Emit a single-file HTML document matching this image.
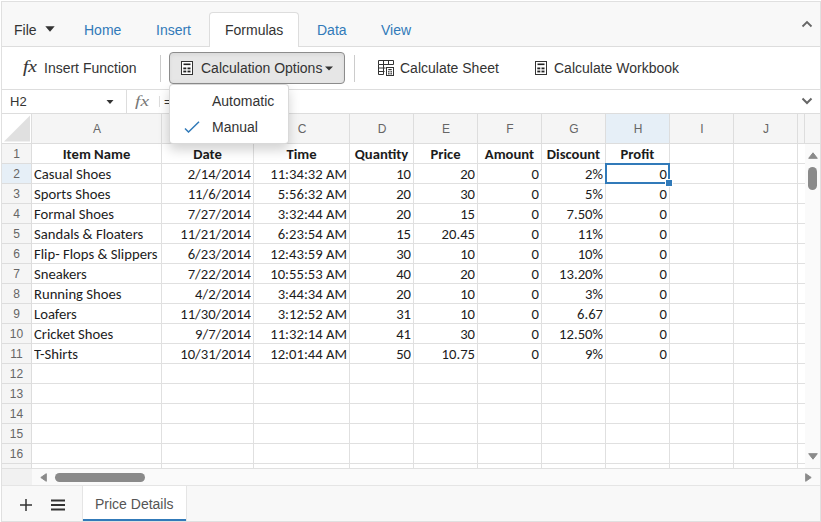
<!DOCTYPE html><html><head><meta charset="utf-8"><title>Spreadsheet</title><style>
html,body{margin:0;padding:0;background:#fff;}
body{width:821px;height:522px;position:relative;overflow:hidden;font-family:"Liberation Sans",Arial,sans-serif;font-size:14px;color:#333;}
.a{position:absolute;}
#wrap{left:1px;top:1px;width:818px;height:519px;border:1px solid #e0e0e0;background:#fff;}
#tabbar{left:2px;top:2px;width:818px;height:44px;background:#f8f8f8;border-bottom:1px solid #ddd;}
.tab{top:22px;height:16px;line-height:16px;color:#317ab9;white-space:nowrap;}
#acttab{left:209px;top:12px;width:88px;height:35px;border:1px solid #ddd;border-bottom:none;border-radius:4px 4px 0 0;background:#fff;}
#ribbon{left:2px;top:47px;width:818px;height:42px;border-bottom:1px solid #ddd;background:#fff;}
.rt{top:60px;height:16px;line-height:16px;white-space:nowrap;}
.sep{width:1px;background:#ccc;}
#cbtn{left:169px;top:52px;width:174px;height:30px;border:1px solid #8c8c8c;border-radius:4px;background:#e6e6e6;box-shadow:inset 0 2px 4px rgba(0,0,0,.06);}
#fbar{left:2px;top:90px;width:818px;height:23px;border-bottom:1px solid #ddd;background:#fff;}
#pop{left:169px;top:84px;width:118px;height:58px;border:1px solid rgba(0,0,0,.15);border-radius:4px;background:#fff;box-shadow:0 6px 12px rgba(0,0,0,.175);}
.mi{left:212px;height:16px;line-height:16px;white-space:nowrap;}
#colhdr{left:2px;top:114px;width:818px;height:29px;background:#f5f5f5;border-bottom:1px solid #ddd;}
.ch{top:114px;height:29px;line-height:30px;text-align:center;text-indent:1px;border-right:1px solid #ddd;color:#666;font-size:12px;}
.rh{left:2px;width:29px;height:19px;line-height:21px;text-align:center;background:#f5f5f5;border-right:1px solid #ddd;border-bottom:1px solid #ddd;color:#666;font-size:12px;}
.hl{background:#e6eff7;}
.gl{background:#e0e0e0;}
.c{height:19px;line-height:20px;font-family:Carlito,Calibri,"Liberation Sans",sans-serif;font-size:14.67px;font-size-adjust:0.4775;color:#1c1c1c;white-space:nowrap;overflow:hidden;}
.b{font-weight:bold;text-align:center;font-size-adjust:0.4849;}
.r{text-align:right;}
#vs{left:805px;top:144px;width:15px;height:324px;background:#fafafa;}
#hs{left:2px;top:468px;width:818px;height:16px;background:#fafafa;border-top:1px solid #e0e0e0;border-bottom:1px solid #e5e5e5;}
#sbar{left:2px;top:486px;width:818px;height:35px;background:#f8f8f8;}
#stab{left:82px;top:486px;width:103px;height:35px;background:#fff;border-left:1px solid #e5e5e5;border-right:1px solid #e5e5e5;}
#sline{left:83px;top:519px;width:103px;height:2px;background:#317ab9;}
</style></head><body>
<div id="wrap" class="a"></div>
<div id="tabbar" class="a"></div>
<div id="acttab" class="a"></div>
<div class="a tab" style="left:14px;color:#333">File</div>
<svg class="a" style="left:45px;top:26px" width="10" height="6" viewBox="0 0 10 6"><path d="M0.3 0.2H9.7L5 5.8z" fill="#333"/></svg>
<div class="a tab" style="left:84px">Home</div>
<div class="a tab" style="left:156px">Insert</div>
<div class="a tab" style="left:317px">Data</div>
<div class="a tab" style="left:381px">View</div>
<div class="a tab" style="left:225px;color:#333">Formulas</div>
<svg class="a" style="left:801px;top:20px" width="12" height="8" viewBox="0 0 12 8"><path d="M1.5 6.5L6 2L10.5 6.5" fill="none" stroke="#666" stroke-width="1.8"/></svg>
<div id="ribbon" class="a"></div>
<div class="a" style="left:23px;top:57px;width:13px;height:20px;line-height:20px;font-family:'Liberation Serif',serif;font-style:italic;font-size:16px;color:#333;transform:scaleX(1.2);transform-origin:0 0;-webkit-text-stroke:0.1px #333">fx</div>
<div class="a rt" style="left:44px">Insert Function</div>
<div class="a sep" style="left:160px;top:55px;height:27px"></div>
<div id="cbtn" class="a"></div>
<svg class="a" style="left:181px;top:61px" width="12" height="14" viewBox="0 0 12 14"><rect x="0.5" y="0.5" width="11" height="13" fill="#fff" stroke="#333"/><rect x="2.5" y="2.5" width="7" height="1.6" fill="#222"/><rect x="2.3" y="6.5" width="3" height="1.8" fill="#222"/><rect x="6.5" y="6.5" width="3" height="1.8" fill="#222"/><rect x="2.3" y="9.6" width="3" height="1.8" fill="#222"/><rect x="6.5" y="9.6" width="3" height="1.8" fill="#222"/></svg>
<div class="a rt" style="left:201px">Calculation Options</div>
<svg class="a" style="left:325px;top:66px" width="8" height="5" viewBox="0 0 8 5"><path d="M0 0.5H8L4 4.5z" fill="#333"/></svg>
<div class="a sep" style="left:354px;top:55px;height:27px"></div>
<svg class="a" style="left:378px;top:60px" width="16" height="16" viewBox="0 0 16 16"><g fill="none" stroke="#333"><path d="M0.5 0.5H15.5V4.5H0.5zM5.5 0.5V14.5M10.5 0.5V4.5M0.5 4.5V14.5H5.5M0.5 8H7.5M0.5 11.5H6.5"/><rect x="8.5" y="7.5" width="7" height="8" fill="#fff"/></g><g fill="#333"><rect x="10.3" y="9" width="3.4" height="1.2"/><rect x="10" y="11.2" width="1.6" height="1.2"/><rect x="12.4" y="11.2" width="1.6" height="1.2"/><rect x="10" y="13.2" width="1.6" height="1.2"/><rect x="12.4" y="13.2" width="1.6" height="1.2"/></g></svg>
<div class="a rt" style="left:400px">Calculate Sheet</div>
<svg class="a" style="left:535px;top:61px" width="12" height="14" viewBox="0 0 12 14"><rect x="0.5" y="0.5" width="11" height="13" fill="#fff" stroke="#333"/><rect x="2.5" y="2.5" width="7" height="1.6" fill="#222"/><rect x="2.3" y="6.5" width="3" height="1.8" fill="#222"/><rect x="6.5" y="6.5" width="3" height="1.8" fill="#222"/><rect x="2.3" y="9.6" width="3" height="1.8" fill="#222"/><rect x="6.5" y="9.6" width="3" height="1.8" fill="#222"/></svg>
<div class="a rt" style="left:554px">Calculate Workbook</div>
<div id="fbar" class="a"></div>
<div class="a" style="left:10px;top:94px;height:16px;line-height:16px;font-size:13px">H2</div>
<svg class="a" style="left:106px;top:100px" width="8" height="4" viewBox="0 0 8 4"><path d="M0.5 0H7.5L4 4z" fill="#333"/></svg>
<div class="a sep" style="left:126px;top:90px;height:23px;background:#ddd"></div>
<div class="a" style="left:135px;top:91px;width:13px;height:20px;line-height:20px;font-family:'Liberation Serif',serif;font-style:italic;font-size:15.5px;color:#777;transform:scaleX(1.25);transform-origin:0 0">fx</div>
<div class="a sep" style="left:159px;top:96px;height:11px;background:#ddd"></div>
<div class="a" style="left:164px;top:94px;height:16px;line-height:16px;font-size:13px">=</div>
<svg class="a" style="left:801px;top:97px" width="12" height="8" viewBox="0 0 12 8"><path d="M1.5 1.5L6 6L10.5 1.5" fill="none" stroke="#666" stroke-width="2"/></svg>
<div id="colhdr" class="a"></div>
<div class="a ch" style="left:2px;width:29px;background:#fff"></div>
<svg class="a" style="left:2px;top:114px" width="29" height="29" viewBox="0 0 29 29"><path d="M28 1.5V27.5H2z" fill="#e0e0e0"/></svg>
<div class="a ch" style="left:32px;width:129px">A</div>
<div class="a ch" style="left:162px;width:91px">B</div>
<div class="a ch" style="left:254px;width:95px">C</div>
<div class="a ch" style="left:350px;width:63px">D</div>
<div class="a ch" style="left:414px;width:63px">E</div>
<div class="a ch" style="left:478px;width:63px">F</div>
<div class="a ch" style="left:542px;width:63px">G</div>
<div class="a ch hl" style="left:606px;width:63px">H</div>
<div class="a ch" style="left:670px;width:63px">I</div>
<div class="a ch" style="left:734px;width:63px">J</div>
<div class="a ch" style="left:798px;width:6px"></div>
<div class="a gl" style="left:161px;top:144px;width:1px;height:324px"></div>
<div class="a gl" style="left:253px;top:144px;width:1px;height:324px"></div>
<div class="a gl" style="left:349px;top:144px;width:1px;height:324px"></div>
<div class="a gl" style="left:413px;top:144px;width:1px;height:324px"></div>
<div class="a gl" style="left:477px;top:144px;width:1px;height:324px"></div>
<div class="a gl" style="left:541px;top:144px;width:1px;height:324px"></div>
<div class="a gl" style="left:605px;top:144px;width:1px;height:324px"></div>
<div class="a gl" style="left:669px;top:144px;width:1px;height:324px"></div>
<div class="a gl" style="left:733px;top:144px;width:1px;height:324px"></div>
<div class="a gl" style="left:797px;top:144px;width:1px;height:324px"></div>
<div class="a rh" style="top:144px">1</div>
<div class="a gl" style="left:32px;top:163px;width:773px;height:1px"></div>
<div class="a rh hl" style="top:164px">2</div>
<div class="a gl" style="left:32px;top:183px;width:773px;height:1px"></div>
<div class="a rh" style="top:184px">3</div>
<div class="a gl" style="left:32px;top:203px;width:773px;height:1px"></div>
<div class="a rh" style="top:204px">4</div>
<div class="a gl" style="left:32px;top:223px;width:773px;height:1px"></div>
<div class="a rh" style="top:224px">5</div>
<div class="a gl" style="left:32px;top:243px;width:773px;height:1px"></div>
<div class="a rh" style="top:244px">6</div>
<div class="a gl" style="left:32px;top:263px;width:773px;height:1px"></div>
<div class="a rh" style="top:264px">7</div>
<div class="a gl" style="left:32px;top:283px;width:773px;height:1px"></div>
<div class="a rh" style="top:284px">8</div>
<div class="a gl" style="left:32px;top:303px;width:773px;height:1px"></div>
<div class="a rh" style="top:304px">9</div>
<div class="a gl" style="left:32px;top:323px;width:773px;height:1px"></div>
<div class="a rh" style="top:324px">10</div>
<div class="a gl" style="left:32px;top:343px;width:773px;height:1px"></div>
<div class="a rh" style="top:344px">11</div>
<div class="a gl" style="left:32px;top:363px;width:773px;height:1px"></div>
<div class="a rh" style="top:364px">12</div>
<div class="a gl" style="left:32px;top:383px;width:773px;height:1px"></div>
<div class="a rh" style="top:384px">13</div>
<div class="a gl" style="left:32px;top:403px;width:773px;height:1px"></div>
<div class="a rh" style="top:404px">14</div>
<div class="a gl" style="left:32px;top:423px;width:773px;height:1px"></div>
<div class="a rh" style="top:424px">15</div>
<div class="a gl" style="left:32px;top:443px;width:773px;height:1px"></div>
<div class="a rh" style="top:444px">16</div>
<div class="a gl" style="left:32px;top:463px;width:773px;height:1px"></div>
<div class="a rh" style="top:464px;height:4px;border-bottom:none"></div>
<div class="a c b" style="top:144px;left:32px;width:129px">Item Name</div>
<div class="a c b" style="top:144px;left:162px;width:91px">Date</div>
<div class="a c b" style="top:144px;left:254px;width:95px">Time</div>
<div class="a c b" style="top:144px;left:350px;width:63px">Quantity</div>
<div class="a c b" style="top:144px;left:414px;width:63px">Price</div>
<div class="a c b" style="top:144px;left:478px;width:63px">Amount</div>
<div class="a c b" style="top:144px;left:542px;width:63px">Discount</div>
<div class="a c b" style="top:144px;left:606px;width:63px">Profit</div>
<div class="a c" style="top:164px;left:34px;width:127px">Casual Shoes</div>
<div class="a c r" style="top:164px;left:162px;width:89px">2/14/2014</div>
<div class="a c r" style="top:164px;left:254px;width:93px">11:34:32 AM</div>
<div class="a c r" style="top:164px;left:350px;width:61px">10</div>
<div class="a c r" style="top:164px;left:414px;width:61px">20</div>
<div class="a c r" style="top:164px;left:478px;width:61px">0</div>
<div class="a c r" style="top:164px;left:542px;width:61px">2%</div>
<div class="a c r" style="top:164px;left:606px;width:61px">0</div>
<div class="a c" style="top:184px;left:34px;width:127px">Sports Shoes</div>
<div class="a c r" style="top:184px;left:162px;width:89px">11/6/2014</div>
<div class="a c r" style="top:184px;left:254px;width:93px">5:56:32 AM</div>
<div class="a c r" style="top:184px;left:350px;width:61px">20</div>
<div class="a c r" style="top:184px;left:414px;width:61px">30</div>
<div class="a c r" style="top:184px;left:478px;width:61px">0</div>
<div class="a c r" style="top:184px;left:542px;width:61px">5%</div>
<div class="a c r" style="top:184px;left:606px;width:61px">0</div>
<div class="a c" style="top:204px;left:34px;width:127px">Formal Shoes</div>
<div class="a c r" style="top:204px;left:162px;width:89px">7/27/2014</div>
<div class="a c r" style="top:204px;left:254px;width:93px">3:32:44 AM</div>
<div class="a c r" style="top:204px;left:350px;width:61px">20</div>
<div class="a c r" style="top:204px;left:414px;width:61px">15</div>
<div class="a c r" style="top:204px;left:478px;width:61px">0</div>
<div class="a c r" style="top:204px;left:542px;width:61px">7.50%</div>
<div class="a c r" style="top:204px;left:606px;width:61px">0</div>
<div class="a c" style="top:224px;left:34px;width:127px">Sandals &amp; Floaters</div>
<div class="a c r" style="top:224px;left:162px;width:89px">11/21/2014</div>
<div class="a c r" style="top:224px;left:254px;width:93px">6:23:54 AM</div>
<div class="a c r" style="top:224px;left:350px;width:61px">15</div>
<div class="a c r" style="top:224px;left:414px;width:61px">20.45</div>
<div class="a c r" style="top:224px;left:478px;width:61px">0</div>
<div class="a c r" style="top:224px;left:542px;width:61px">11%</div>
<div class="a c r" style="top:224px;left:606px;width:61px">0</div>
<div class="a c" style="top:244px;left:34px;width:127px">Flip- Flops &amp; Slippers</div>
<div class="a c r" style="top:244px;left:162px;width:89px">6/23/2014</div>
<div class="a c r" style="top:244px;left:254px;width:93px">12:43:59 AM</div>
<div class="a c r" style="top:244px;left:350px;width:61px">30</div>
<div class="a c r" style="top:244px;left:414px;width:61px">10</div>
<div class="a c r" style="top:244px;left:478px;width:61px">0</div>
<div class="a c r" style="top:244px;left:542px;width:61px">10%</div>
<div class="a c r" style="top:244px;left:606px;width:61px">0</div>
<div class="a c" style="top:264px;left:34px;width:127px">Sneakers</div>
<div class="a c r" style="top:264px;left:162px;width:89px">7/22/2014</div>
<div class="a c r" style="top:264px;left:254px;width:93px">10:55:53 AM</div>
<div class="a c r" style="top:264px;left:350px;width:61px">40</div>
<div class="a c r" style="top:264px;left:414px;width:61px">20</div>
<div class="a c r" style="top:264px;left:478px;width:61px">0</div>
<div class="a c r" style="top:264px;left:542px;width:61px">13.20%</div>
<div class="a c r" style="top:264px;left:606px;width:61px">0</div>
<div class="a c" style="top:284px;left:34px;width:127px">Running Shoes</div>
<div class="a c r" style="top:284px;left:162px;width:89px">4/2/2014</div>
<div class="a c r" style="top:284px;left:254px;width:93px">3:44:34 AM</div>
<div class="a c r" style="top:284px;left:350px;width:61px">20</div>
<div class="a c r" style="top:284px;left:414px;width:61px">10</div>
<div class="a c r" style="top:284px;left:478px;width:61px">0</div>
<div class="a c r" style="top:284px;left:542px;width:61px">3%</div>
<div class="a c r" style="top:284px;left:606px;width:61px">0</div>
<div class="a c" style="top:304px;left:34px;width:127px">Loafers</div>
<div class="a c r" style="top:304px;left:162px;width:89px">11/30/2014</div>
<div class="a c r" style="top:304px;left:254px;width:93px">3:12:52 AM</div>
<div class="a c r" style="top:304px;left:350px;width:61px">31</div>
<div class="a c r" style="top:304px;left:414px;width:61px">10</div>
<div class="a c r" style="top:304px;left:478px;width:61px">0</div>
<div class="a c r" style="top:304px;left:542px;width:61px">6.67</div>
<div class="a c r" style="top:304px;left:606px;width:61px">0</div>
<div class="a c" style="top:324px;left:34px;width:127px">Cricket Shoes</div>
<div class="a c r" style="top:324px;left:162px;width:89px">9/7/2014</div>
<div class="a c r" style="top:324px;left:254px;width:93px">11:32:14 AM</div>
<div class="a c r" style="top:324px;left:350px;width:61px">41</div>
<div class="a c r" style="top:324px;left:414px;width:61px">30</div>
<div class="a c r" style="top:324px;left:478px;width:61px">0</div>
<div class="a c r" style="top:324px;left:542px;width:61px">12.50%</div>
<div class="a c r" style="top:324px;left:606px;width:61px">0</div>
<div class="a c" style="top:344px;left:34px;width:127px">T-Shirts</div>
<div class="a c r" style="top:344px;left:162px;width:89px">10/31/2014</div>
<div class="a c r" style="top:344px;left:254px;width:93px">12:01:44 AM</div>
<div class="a c r" style="top:344px;left:350px;width:61px">50</div>
<div class="a c r" style="top:344px;left:414px;width:61px">10.75</div>
<div class="a c r" style="top:344px;left:478px;width:61px">0</div>
<div class="a c r" style="top:344px;left:542px;width:61px">9%</div>
<div class="a c r" style="top:344px;left:606px;width:61px">0</div>
<div class="a" style="left:605px;top:163px;width:61px;height:17px;border:2px solid #317ab9"></div>
<div class="a" style="left:665px;top:179px;width:6px;height:6px;background:#317ab9;border:1px solid #fff"></div>
<div id="vs" class="a"></div>
<svg class="a" style="left:808px;top:152px" width="10" height="7" viewBox="0 0 10 7"><path d="M5 0.8L9.3 6.3H0.7z" fill="#8a8a8a" stroke="#8a8a8a" stroke-width="1" stroke-linejoin="round"/></svg>
<div class="a" style="left:808px;top:167px;width:9px;height:23px;border-radius:4.5px;background:#8a8a8a"></div>
<svg class="a" style="left:808px;top:453px" width="10" height="7" viewBox="0 0 10 7"><path d="M5 6.2L9.3 0.7H0.7z" fill="#8a8a8a" stroke="#8a8a8a" stroke-width="1" stroke-linejoin="round"/></svg>
<div id="hs" class="a"></div>
<div class="a" style="left:2px;top:469px;width:30px;height:16px;background:#f1f1f1"></div>
<svg class="a" style="left:40px;top:473px" width="7" height="9" viewBox="0 0 7 9"><path d="M0.8 4.5L6.3 0.7V8.3z" fill="#8a8a8a" stroke="#8a8a8a" stroke-width="1" stroke-linejoin="round"/></svg>
<div class="a" style="left:55px;top:473px;width:90px;height:9px;border-radius:4.5px;background:#8a8a8a"></div>
<svg class="a" style="left:805px;top:473px" width="7" height="9" viewBox="0 0 7 9"><path d="M6.2 4.5L0.7 0.7V8.3z" fill="#8a8a8a" stroke="#8a8a8a" stroke-width="1" stroke-linejoin="round"/></svg>
<div id="sbar" class="a"></div>
<div id="stab" class="a"></div><div id="sline" class="a"></div>
<svg class="a" style="left:20px;top:499px" width="12" height="12" viewBox="0 0 12 12"><path d="M6 0V12M0 6H12" stroke="#333" stroke-width="1.5" fill="none"/></svg>
<svg class="a" style="left:51px;top:499px" width="14" height="12" viewBox="0 0 14 12"><path d="M0 1.5H14M0 6H14M0 10.5H14" stroke="#333" stroke-width="2" fill="none"/></svg>
<div class="a" style="left:95px;top:496px;height:16px;line-height:16px;white-space:nowrap;color:#555">Price Details</div>
<div id="pop" class="a"></div>
<div class="a mi" style="top:93px">Automatic</div>
<div class="a mi" style="top:119px">Manual</div>
<svg class="a" style="left:184px;top:121px" width="16" height="12" viewBox="0 0 16 12"><path d="M1 7.5L4.5 11L15 0.8" fill="none" stroke="#317ab9" stroke-width="1.5"/></svg>
</body></html>
